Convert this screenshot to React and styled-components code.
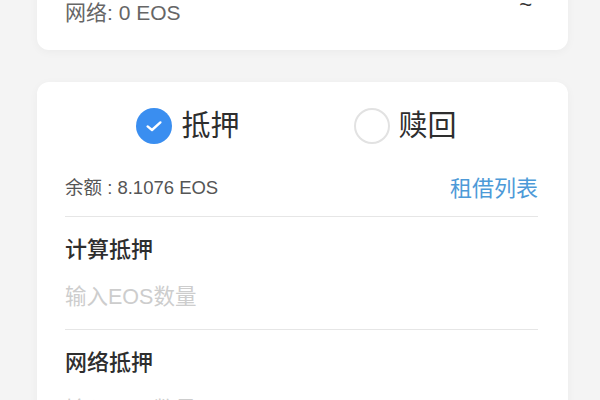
import React, { useState } from "react";
import styled, { createGlobalStyle } from "styled-components";

const font = `"Liberation Sans", "Noto Sans CJK SC", sans-serif`;

const GlobalStyle = createGlobalStyle`
  html, body {
    margin: 0;
    padding: 0;
    background: #f4f4f4;
    font-family: ${font};
    overflow: hidden;
  }
`;

function CheckIcon() {
  return (
    <svg width="20" height="20" viewBox="0 0 20 20" fill="none">
      <path
        d="M3.6 10.4 L8 14 L16.4 6.4"
        stroke="#fff"
        strokeWidth="2.4"
        strokeLinecap="round"
        strokeLinejoin="round"
      />
    </svg>
  );
}

export default function App() {
  const [mode, setMode] = useState("stake");

  return (
    <Page>
      <GlobalStyle />
      <TopCard>
        <NetRow>
          <NetText>网络: 0 EOS</NetText>
          <Tilde>~</Tilde>
        </NetRow>
      </TopCard>

      <Card>
        <RadioRow>
          <Option onClick={() => setMode("stake")}>
            <Circle checked={mode === "stake"}>
              {mode === "stake" && <CheckIcon />}
            </Circle>
            <OptionText>抵押</OptionText>
          </Option>
          <Option onClick={() => setMode("redeem")}>
            <Circle checked={mode === "redeem"}>
              {mode === "redeem" && <CheckIcon />}
            </Circle>
            <OptionText>赎回</OptionText>
          </Option>
        </RadioRow>

        <BalanceRow>
          <Balance>余额 : 8.1076 EOS</Balance>
          <Link>租借列表</Link>
        </BalanceRow>

        <Field>
          <Label>计算抵押</Label>
          <Input placeholder="输入EOS数量" />
        </Field>
        <Field>
          <Label>网络抵押</Label>
          <Input placeholder="输入EOS数量" />
        </Field>
      </Card>
    </Page>
  );
}

const Page = styled.div`
  width: 531px;
  margin-left: 37px;
  margin-top: -32px;
  display: flex;
  flex-direction: column;
  gap: 32px;
`;

const TopCard = styled.div`
  background: #fff;
  border-radius: 12px;
  box-shadow: 0 2px 10px rgba(0, 0, 0, 0.04);
  padding: 30px 28px 24px 28px;
`;

const NetRow = styled.div`
  display: flex;
  justify-content: space-between;
  align-items: flex-start;
  height: 28px;
`;

const NetText = styled.span`
  font-size: 21px;
  line-height: 30px;
  color: #666;
`;

const Tilde = styled.span`
  font-size: 22px;
  line-height: 20px;
  color: #333;
  margin-right: 8px;
  margin-top: -3px;
`;

const Card = styled.div`
  background: #fff;
  border-radius: 12px;
  box-shadow: 0 2px 10px rgba(0, 0, 0, 0.04);
  padding: 26px 30px 0 28px;
  height: 400px;
`;

const RadioRow = styled.div`
  display: flex;
  justify-content: center;
  gap: 114px;
  padding-right: 10px;
  height: 36px;
`;

const Option = styled.div`
  display: flex;
  align-items: center;
  gap: 9px;
  cursor: pointer;
`;

const Circle = styled.span`
  width: 36px;
  height: 36px;
  flex-shrink: 0;
  border-radius: 50%;
  box-sizing: border-box;
  display: flex;
  align-items: center;
  justify-content: center;
  background: ${(p) => (p.checked ? "#3a8ef0" : "#fff")};
  border: ${(p) => (p.checked ? "none" : "2px solid #e2e2e2")};
`;

const OptionText = styled.span`
  font-size: 29px;
  line-height: 36px;
  color: #2e2e2e;
`;

const BalanceRow = styled.div`
  display: flex;
  justify-content: space-between;
  align-items: center;
  margin-top: 28px;
  height: 28px;
  padding-bottom: 16px;
  border-bottom: 1px solid #e6e6e6;
`;

const Balance = styled.span`
  font-size: 18.5px;
  color: #555;
`;

const Link = styled.span`
  font-size: 22px;
  color: #4d9ad8;
  cursor: pointer;
`;

const Field = styled.div`
  display: flex;
  flex-direction: column;
  padding-top: 20px;
  border-bottom: 1px solid #e6e6e6;
`;

const Label = styled.div`
  font-size: 22px;
  line-height: 26px;
  font-weight: 500;
  color: #2e2e2e;
`;

const Input = styled.input`
  border: none;
  outline: none;
  padding: 0;
  margin: 16px 0 14px;
  height: 36px;
  font-family: ${font};
  font-size: 21.5px;
  color: #333;
  background: transparent;
  &::placeholder {
    color: #cdcdcd;
  }
`;
